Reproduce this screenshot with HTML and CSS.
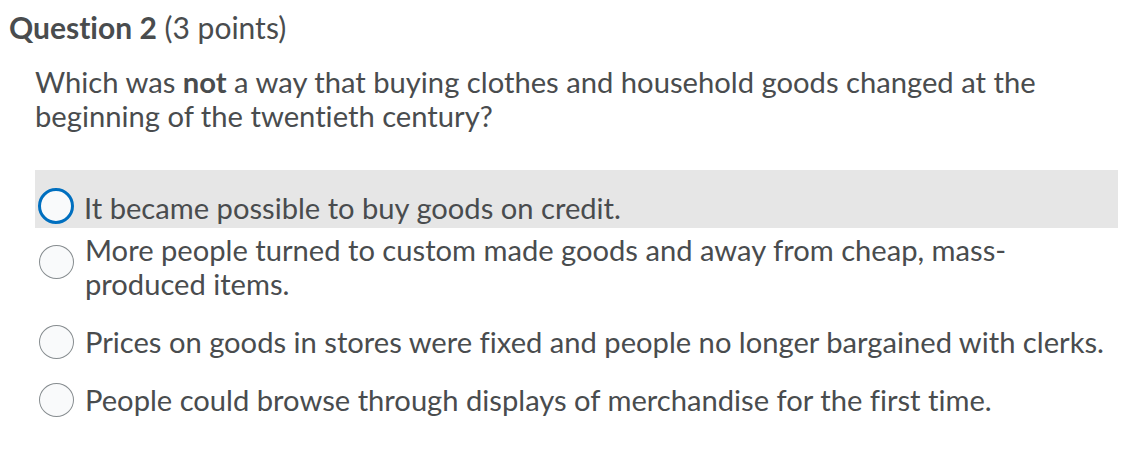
FILE: index.html
```html
<!DOCTYPE html>
<html>
<head>
<meta charset="utf-8">
<link rel="stylesheet" href="styles.css">
</head>
<body>
<div class="question">
  <h2 class="q-title"><strong>Question 2</strong> (3 points)</h2>
  <p class="q-text">Which was <strong>not</strong> a way that buying clothes and household goods changed at the beginning of the twentieth century?</p>
  <div class="options">
    <label class="option option-hover">
      <span class="radio radio-focus"></span>
      <span class="opt-text">It became possible to buy goods on credit.</span>
    </label>
    <label class="option option-second">
      <span class="radio"></span>
      <span class="opt-text">More people turned to custom made goods and away from cheap, mass-produced items.</span>
    </label>
    <label class="option">
      <span class="radio"></span>
      <span class="opt-text">Prices on goods in stores were fixed and people no longer bargained with clerks.</span>
    </label>
    <label class="option">
      <span class="radio"></span>
      <span class="opt-text">People could browse through displays of merchandise for the first time.</span>
    </label>
  </div>
</div>
</body>
</html>
```
FILE: styles.css
```css
html, body {
  margin: 0;
  padding: 0;
  background: #ffffff;
}
body {
  font-family: Lato, "Liberation Sans", sans-serif;
  color: #494c4e;
  font-variant-ligatures: none;
}
.question {
  padding: 10px 0 0 9px;
}
.q-title {
  margin: 0;
  font-size: 30px;
  line-height: 34px;
  font-weight: 400;
  color: #494c4e;
}
.q-title strong {
  font-weight: 700;
}
.q-text {
  margin: 21px 0 0 26px;
  width: 1040px;
  font-size: 29.2px;
  line-height: 34px;
}
.q-text strong {
  font-weight: 700;
}
.options {
  margin-top: 37px;
  margin-left: 26px;
  width: 1083px;
  display: flex;
  flex-direction: column;
}
.option {
  display: flex;
  align-items: flex-start;
  gap: 11px;
  padding-left: 4px;
  font-size: 29.15px;
  line-height: 34px;
  margin-bottom: 24px;
}
.option-hover {
  background: #e6e6e6;
  padding-top: 21px;
  padding-bottom: 3px;
  margin-bottom: 5px;
}
.radio {
  flex: none;
  box-sizing: border-box;
  width: 35px;
  height: 34px;
  border-radius: 50%;
  border: 1.5px solid #868c8f;
  background: #f9fafb;
  margin-top: 0;
}
.option-second .radio {
  margin-top: 12px;
}
.radio-focus {
  border: 3.5px solid #006fbf;
  width: 36px;
  height: 36px;
  margin-left: -1px;
  margin-top: -3px;
  margin-right: -1px;
  background: #f9fafb;
}
.opt-text {
  flex: 1;
}
```
